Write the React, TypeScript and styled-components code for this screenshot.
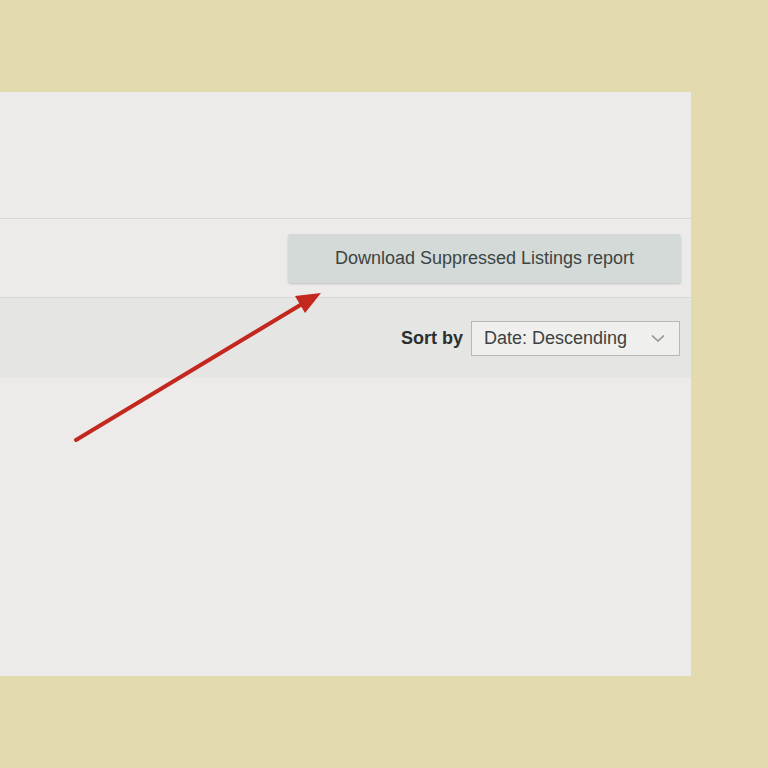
import React from "react";
import styled, { createGlobalStyle } from "styled-components";

const Global = createGlobalStyle`
  html, body { margin: 0; padding: 0; background: #e3dbae; }
  body { font-family: "Liberation Sans", Arial, sans-serif; }
`;

const Page = styled.div`
  width: 768px; height: 768px; background: #e3dbae;
  padding-top: 92px; box-sizing: border-box; position: relative;
`;
const Panel = styled.div`
  width: 691px; height: 584px; background: #ecebe9;
  display: flex; flex-direction: column;
`;
const Header = styled.div`
  height: 126px; border-bottom: 1px solid #d6d6d3;
`;
const ButtonRow = styled.div`
  height: 78px; border-bottom: 1px solid #d9d9d6;
  display: flex; justify-content: flex-end; align-items: center;
  padding-right: 10px;
`;
const Button = styled.button`
  width: 393px; height: 49px; background: #d4dad8; border: none;
  border-radius: 3px; box-shadow: 0 1px 2px rgba(0,0,0,0.18);
  font-family: inherit; font-size: 18px; color: #3c4542;
  margin-top: 1px;
`;
const SortRow = styled.div`
  height: 80px; background: #e5e5e3;
  display: flex; justify-content: flex-end; align-items: center;
  padding-right: 11px; gap: 8px;
`;
const Label = styled.span`
  font-weight: bold; font-size: 18px; color: #2b302e;
`;
const Select = styled.div`
  width: 209px; height: 35px; border: 1px solid #b7b9b7; background: #efefed;
  display: flex; align-items: center; justify-content: space-between;
  padding: 0 14px 0 12px; box-sizing: border-box;
  font-size: 18px; color: #3b4240;
`;
const Arrow = styled.svg`
  position: absolute; left: 0; top: 0;
`;

export default function App() {
  return (
    <Page>
      <Global />
      <Panel>
        <Header />
        <ButtonRow>
          <Button>Download Suppressed Listings report</Button>
        </ButtonRow>
        <SortRow>
          <Label>Sort by</Label>
          <Select>
            <span>Date: Descending</span>
            <svg width="14" height="9" viewBox="0 0 14 9">
              <path d="M1 1.5 L7 7 L13 1.5" fill="none" stroke="#8c918f" strokeWidth="1.6" />
            </svg>
          </Select>
        </SortRow>
      </Panel>
      <Arrow width="768" height="768">
        <line x1="76" y1="440" x2="302" y2="304" stroke="#c3271d" strokeWidth="4" strokeLinecap="round" />
        <polygon points="321,293 295,296 305,313" fill="#c3271d" />
      </Arrow>
    </Page>
  );
}
